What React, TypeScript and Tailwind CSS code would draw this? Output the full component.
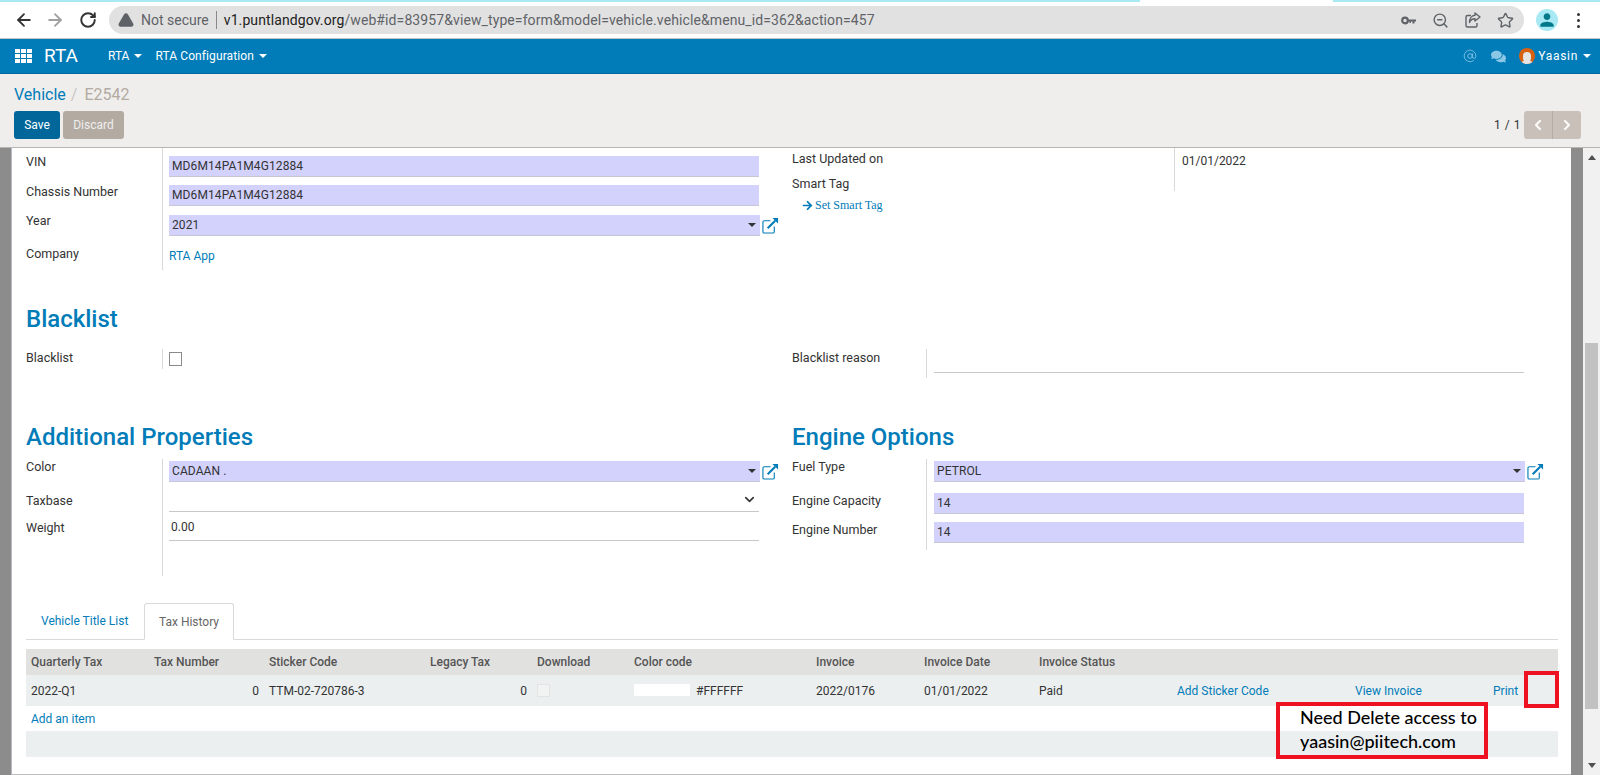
import { ReactNode } from 'react';
import { ArrowLeft, ArrowRight, RotateCw, TriangleAlert, ZoomOut, Star, ChevronDown, AtSign } from 'lucide-react';
import { FaComments, FaChevronLeft, FaChevronRight, FaArrowRight } from 'react-icons/fa';
import { MdPerson } from 'react-icons/md';

const Caret = ({ className = 'border-t-white' }: { className?: string }) => (
  <span className={`inline-block w-0 h-0 border-x-[4px] border-x-transparent border-t-[4px] ${className}`} />
);

const OpenLink = () => (
  <svg width="17" height="17" viewBox="0 0 18 18" className="shrink-0" fill="none">
    <path d="M9 4H2.5A1.5 1.5 0 0 0 1 5.5v10A1.5 1.5 0 0 0 2.5 17h9a1.5 1.5 0 0 0 1.5-1.5V10" stroke="#017cb8" strokeWidth="1.2" />
    <path d="M6 12l8-8" stroke="#017cb8" strokeWidth="2.2" />
    <path d="M11 1h6v6z" fill="#017cb8" />
  </svg>
);

const KeyIcon = () => (
  <svg width="15" height="9" viewBox="0 0 15 9" fill="none">
    <circle cx="4" cy="4.5" r="2.8" stroke="#5f6368" strokeWidth="2.2" />
    <path d="M7 3.5h8v2h-1.5v2h-2v-2H10v1.5H8.5V5.5H7z" fill="#5f6368" />
  </svg>
);

const ShareIcon = () => (
  <svg width="16" height="16" viewBox="0 0 16 16" fill="none" stroke="#5f6368" strokeWidth="1.4">
    <path d="M6 3.5H2.5A1.5 1.5 0 0 0 1 5v8.5A1.5 1.5 0 0 0 2.5 15h8a1.5 1.5 0 0 0 1.5-1.5V11" />
    <path d="M10 1l5 4-5 4V6.8C7.500 6.800 5.500 8 4.500 10.500 4.500 7 6.500 3.600 10 3.300z" strokeLinejoin="round" />
  </svg>
);

const Label = ({ children, w = 'w-[136px]' }: { children: ReactNode; w?: string }) => (
  <div className={`${w} shrink-0 text-[12.5px] leading-4 text-[#333] font-['Roboto',sans-serif]`}>{children}</div>
);

const Filled = ({ value, select }: { value: string; select?: boolean }) => (
  <div className="h-[21px] flex-1 flex items-center justify-between pl-[3px] pr-[4px] bg-[#d2d2fd] border-b border-[#c6c6d4] text-[12px] tracking-[0.1px]">
    <span>{value}</span>
    {select && <Caret className="border-t-[#333]" />}
  </div>
);

function Heading({ children }: { children: ReactNode }) {
  return <h2 className="text-[24px] leading-[30px] font-medium text-[#017cb8]">{children}</h2>;
}

const headers = [
  'Quarterly Tax',
  'Tax Number',
  'Sticker Code',
  'Legacy Tax',
  'Download',
  'Color code',
  'Invoice',
  'Invoice Date',
  'Invoice Status',
  '',
  '',
  '',
  '',
];

export default function App() {
  return (
    <div className="relative w-[1600px] h-[775px] overflow-hidden flex flex-col bg-white text-[#333] font-['Roboto',sans-serif]">
      {/* browser chrome */}
      <div className="h-[39px] shrink-0 bg-white border-b border-[#c4c4c4]">
        <div className="h-[2px] flex">
          <div className="w-[1140px] bg-[#a8e9f3]" />
          <div className="w-[193px]" />
          <div className="flex-1 bg-[#a8e9f3]" />
        </div>
        <div className="flex items-center h-[28px] mt-[4px]">
          <div className="w-[109px] shrink-0 flex items-center pl-[14px] gap-[11px]">
            <ArrowLeft size={20} strokeWidth={2.2} className="text-[#333]" />
            <ArrowRight size={20} strokeWidth={2.2} className="text-[#a0a0a0]" />
            <RotateCw size={18} strokeWidth={2.6} className="text-[#333] ml-[3px]" />
          </div>
          <div className="w-[1415px] h-[28px] rounded-full bg-[#e1e1e1] flex items-center pl-[9px] pr-[10px]">
            <TriangleAlert size={16} strokeWidth={2.4} fill="#5f6368" className="text-[#5f6368]" />
            <span className="ml-[7px] text-[14px] text-[#5f6368]">Not secure</span>
            <span className="mx-[7px] h-[18px] border-l border-[#888]" />
            <span className="text-[14px] tracking-[0.1px] text-[#222]">v1.puntlandgov.org</span>
            <span className="text-[14px] tracking-[0.1px] text-[#5f6368]">/web#id=83957&amp;view_type=form&amp;model=vehicle.vehicle&amp;menu_id=362&amp;action=457</span>
            <div className="ml-auto flex items-center gap-[16px] text-[#5f6368]">
              <KeyIcon />
              <ZoomOut size={17} strokeWidth={2} />
              <ShareIcon />
              <Star size={17} strokeWidth={2} />
            </div>
          </div>
          <div className="ml-[12px] w-[22px] h-[22px] rounded-full bg-[#a8e9f3] flex items-center justify-center text-[#01798a]">
            <MdPerson size={20} />
          </div>
          <div className="ml-[19px] flex flex-col gap-[3px]">
            <span className="w-[3px] h-[3px] rounded-full bg-[#333]" />
            <span className="w-[3px] h-[3px] rounded-full bg-[#333]" />
            <span className="w-[3px] h-[3px] rounded-full bg-[#333]" />
          </div>
        </div>
      </div>

      {/* odoo navbar */}
      <div className="h-[35px] shrink-0 bg-[#017cb8] border-b border-[#01689b] flex items-center pl-[15px] pr-[9px] text-white text-[12px]">
        <svg width="17" height="14" viewBox="0 0 17 14" fill="#fff">
          <rect x="0" y="0" width="5" height="4" />
          <rect x="6" y="0" width="5" height="4" />
          <rect x="12" y="0" width="5" height="4" />
          <rect x="0" y="5" width="5" height="4" />
          <rect x="6" y="5" width="5" height="4" />
          <rect x="12" y="5" width="5" height="4" />
          <rect x="0" y="10" width="5" height="4" />
          <rect x="6" y="10" width="5" height="4" />
          <rect x="12" y="10" width="5" height="4" />
        </svg>
        <span className="ml-[12px] text-[19px]">RTA</span>
        <span className="ml-[30px]">RTA</span>
        <span className="ml-[5px] mb-[1px] flex"><Caret /></span>
        <span className="ml-[13px] tracking-[0.1px]">RTA Configuration</span>
        <span className="ml-[5px] mb-[1px] flex"><Caret /></span>
        <div className="ml-auto flex items-center">
          <AtSign size={14} strokeWidth={1.4} className="text-[#8cc8e6]" />
          <FaComments size={15} className="ml-[14px] text-[#8cc8e6]" />
          <div className="ml-[13px] w-[16px] h-[16px] rounded-full bg-[#d9600f] flex flex-col items-center justify-end overflow-hidden">
            <span className="w-[8px] h-[10px] rounded-full bg-[#e4e4e4]" />
            <span className="w-[12px] h-[3px] -mt-[1px] rounded-t-full bg-[#e4e4e4]" />
          </div>
          <span className="ml-[3px] text-[12px] tracking-[0.7px]">Yaasin</span>
          <span className="ml-[5px] flex"><Caret /></span>
        </div>
      </div>

      {/* control panel */}
      <div className="h-[74px] shrink-0 bg-[#efeeed] border-b border-[#b5b5b5] pl-[14px] pr-[19px]">
        <div className="h-[37px] pt-[9px] flex items-baseline text-[16px]">
          <span className="text-[#017cb8]">Vehicle</span>
          <span className="ml-[5px] text-[#c9c6c4]">/</span>
          <span className="ml-[7px] text-[#b3aaa2]">E2542</span>
        </div>
        <div className="flex items-center text-[12px]">
          <button className="w-[46px] h-[28px] rounded-[3px] bg-[#016699] text-white">Save</button>
          <button className="ml-[3px] w-[61px] h-[28px] rounded-[3px] bg-[#b3aaa2] text-[#eeeeee]">Discard</button>
          <div className="ml-auto flex items-center">
            <span className="tracking-[0.5px]">1 / 1</span>
            <div className="ml-[3px] w-[57px] h-[28px] rounded-[3px] bg-[#c9c0ba] flex text-white">
              <span className="w-[29px] flex items-center justify-center border-r border-[#b5aba5]"><FaChevronLeft size={12} /></span>
              <span className="flex-1 flex items-center justify-center"><FaChevronRight size={12} /></span>
            </div>
          </div>
        </div>
      </div>

      {/* scrolled form */}
      <div className="flex flex-1 min-h-0">
        <div className="w-[11px] bg-[#8c8c8c] border-r border-[#b8b8c8] box-content" />
        <div className="w-[1559px] pl-[14px] border-b border-[#bdbdbd]">
          <div className="flex">
            <div className="w-[766px]">
              <div className="flex">
                <Label><div className="pt-[6px] h-[36px]">VIN</div><div className="h-[29px]">Chassis Number</div><div className="h-[33px]">Year</div><div>Company</div></Label>
                <div className="w-[598px] border-l border-[#d9d9d9] pl-[6px] pt-[8px] h-[122px] flex flex-col">
                  <div className="w-[590px] flex"><Filled value="MD6M14PA1M4G12884" /></div>
                  <div className="w-[590px] flex mt-[8px]"><Filled value="MD6M14PA1M4G12884" /></div>
                  <div className="w-[610px] flex items-center mt-[9px]"><Filled value="2021" select /><span className="ml-[2px] flex"><OpenLink /></span></div>
                  <span className="mt-[11px] text-[12px] text-[#017cb8]">RTA App</span>
                </div>
              </div>
            </div>
            <div className="flex flex-1">
              <div className="w-[382px] pt-[3px]">
                <Label w="w-full"><div className="h-[25px]">Last Updated on</div><div className="h-[18px]">Smart Tag</div></Label>
                <div className="mt-[2px] pl-[10px] flex items-center text-[12px] text-[#017cb8] font-['Liberation_Serif',serif]">
                  <FaArrowRight size={11} />
                  <span className="ml-[2px]">Set Smart Tag</span>
                </div>
              </div>
              <div className="h-[43px] border-l border-[#d9d9d9] pl-[7px] pt-[4px] text-[12px]">01/01/2022</div>
            </div>
          </div>

          <div className="mt-[34px]"><Heading>Blacklist</Heading></div>
          <div className="flex mt-[15px]">
            <div className="w-[766px] flex">
              <Label><div className="pt-[1px]">Blacklist</div></Label>
              <div className="h-[20px] border-l border-[#d9d9d9] pl-[6px] pt-[3px]">
                <div className="w-[13px] h-[14px] border border-[#8a8a8a]" />
              </div>
            </div>
            <Label w="w-[134px]"><div className="pt-[1px]">Blacklist reason</div></Label>
            <div className="h-[29px] border-l border-[#d9d9d9] pl-[7px]">
              <div className="w-[590px] h-[24px] border-b border-[#c8c8c8]" />
            </div>
          </div>

          <div className="flex mt-[44px]">
            <div className="w-[766px]"><Heading>Additional Properties</Heading></div>
            <Heading>Engine Options</Heading>
          </div>
          <div className="flex mt-[7px]">
            <div className="w-[766px] flex">
              <Label><div className="h-[34px]">Color</div><div className="h-[27px]">Taxbase</div><div>Weight</div></Label>
              <div className="border-l border-[#d9d9d9] pl-[6px] pt-[2px] h-[117px] w-[630px]">
                <div className="w-[610px] flex items-center"><Filled value="CADAAN ." select /><span className="ml-[2px] flex"><OpenLink /></span></div>
                <div className="w-[590px] h-[30px] border-b border-[#c8c8c8] flex items-end justify-end pr-[2px] pb-[4px]"><ChevronDown size={15} strokeWidth={2.6} className="text-[#333]" /></div>
                <div className="w-[590px] h-[29px] border-b border-[#c8c8c8] flex items-end pl-[2px] pb-[4px] text-[12px]">0.00</div>
              </div>
            </div>
            <div className="flex">
              <Label w="w-[134px]"><div className="h-[34px]">Fuel Type</div><div className="h-[29px]">Engine Capacity</div><div>Engine Number</div></Label>
              <div className="border-l border-[#d9d9d9] pl-[7px] pt-[2px] h-[91px]">
                <div className="w-[610px] flex items-center"><Filled value="PETROL" select /><span className="ml-[2px] flex"><OpenLink /></span></div>
                <div className="w-[590px] flex mt-[11px]"><Filled value="14" /></div>
                <div className="w-[590px] flex mt-[8px]"><Filled value="14" /></div>
              </div>
            </div>
          </div>

          {/* tabs */}
          <div className="mt-[27px] w-[1532px] h-[37px] border-b border-[#d9d9d9] flex text-[12px]">
            <div className="w-[118px] flex items-center pl-[15px] text-[#017cb8]">Vehicle Title List</div>
            <div className="w-[90px] h-[37px] border border-b-white border-[#d9d9d9] rounded-t-[3px] bg-white flex items-center justify-center text-[#666]">Tax History</div>
          </div>

          <table className="mt-[9px] w-[1532px] table-fixed border-collapse text-[12px]">
            <colgroup>
              <col className="w-[123px]" />
              <col className="w-[115px]" />
              <col className="w-[161px]" />
              <col className="w-[107px]" />
              <col className="w-[97px]" />
              <col className="w-[182px]" />
              <col className="w-[108px]" />
              <col className="w-[115px]" />
              <col className="w-[138px]" />
              <col className="w-[178px]" />
              <col className="w-[138px]" />
              <col className="w-[42px]" />
              <col />
            </colgroup>
            <thead>
              <tr className="h-[26px] bg-[#e1e1e0]">
                {headers.map((h, i) => (
                  <th key={i} className="px-[5px] text-left font-medium text-[#555]">{h}</th>
                ))}
              </tr>
            </thead>
            <tbody>
              <tr className="h-[31px] bg-[#ebeff0]">
                <td className="px-[5px]">2022-Q1</td>
                <td className="px-[5px] text-right">0</td>
                <td className="px-[5px]">TTM-02-720786-3</td>
                <td className="px-[5px] text-right">0</td>
                <td className="px-[5px]"><div className="w-[13px] h-[13px] bg-[#f1f3f3] border border-[#e2e4e4]" /></td>
                <td className="px-[5px]">
                  <div className="flex items-center -mt-[2px]">
                    <div className="w-[56px] h-[12px] bg-white" />
                    <span className="ml-[6px] mt-[2px]">#FFFFFF</span>
                  </div>
                </td>
                <td className="px-[5px]">2022/0176</td>
                <td className="px-[5px]">01/01/2022</td>
                <td className="px-[5px]">Paid</td>
                <td className="px-[5px] text-[#017cb8]">Add Sticker Code</td>
                <td className="px-[5px] text-[#017cb8]">View Invoice</td>
                <td className="px-[5px] text-[#017cb8]">Print</td>
                <td />
              </tr>
              <tr className="h-[25px]">
                <td colSpan={13} className="px-[5px] text-[#017cb8]">Add an item</td>
              </tr>
              <tr className="h-[26px] bg-[#ebeff0]">
                <td colSpan={13} />
              </tr>
            </tbody>
          </table>
        </div>
        <div className="w-[12px] bg-[#8c8c8c]" />
        <div className="w-[17px] bg-[#f1f1f1] flex flex-col items-center">
          <span className="mt-[7px] w-0 h-0 border-x-[4px] border-x-transparent border-b-[5px] border-b-[#505050]" />
          <div className="mt-[183px] w-[13px] h-[366px] bg-[#c1c1c1]" />
          <span className="mt-auto mb-[7px] w-0 h-0 border-x-[4px] border-x-transparent border-t-[5px] border-t-[#505050]" />
        </div>
      </div>

      {/* red annotations pasted over the screenshot */}
      <div className="absolute left-[1524px] top-[671px] w-[35px] h-[37px] border-[4px] border-[#ee1122]" />
      <div className="absolute left-[1276px] top-[702px] w-[212px] h-[57px] border-[4px] border-[#ee1122] pl-[20px] text-[18px] leading-[24px] text-black font-['Lato',sans-serif] font-medium whitespace-nowrap">
        <div className="-mt-[1px]">Need Delete access to</div>
        <div>yaasin@piitech.com</div>
      </div>
    </div>
  );
}
